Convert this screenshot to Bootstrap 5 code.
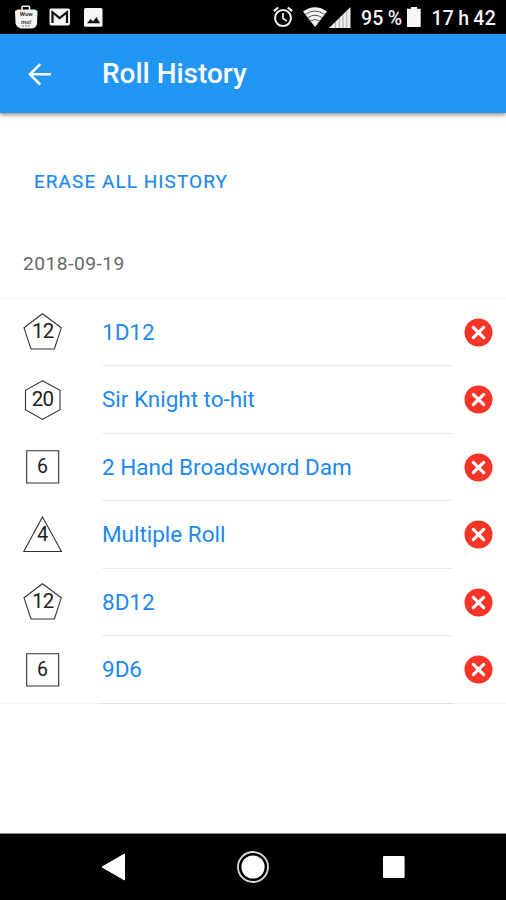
<!DOCTYPE html>
<html lang="en">
<head>
<meta charset="utf-8">
<meta name="viewport" content="width=device-width, initial-scale=1">
<title>Roll History</title>
<link href="https://cdn.jsdelivr.net/npm/bootstrap@5.3.0/dist/css/bootstrap.min.css" rel="stylesheet">
<style>
  body { font-family: Roboto, "Liberation Sans", sans-serif; background: #fff; height: 900px; overflow: hidden; }
  svg { display: block; flex: none; }
  svg text { font-family: Roboto, "Liberation Sans", sans-serif; }
  .status-bar { height: 34px; background: #000; color: #f2f2f2; padding: 0 10px 0 15px; font-size: 19.5px; font-weight: 500; white-space: nowrap; }
  .status-text { line-height: 34px; padding-top: 3px; margin-left: 10px; letter-spacing: .25px; word-spacing: -1px; }
  .mail-icon { margin-left: 11px; }
  .photo-icon { margin-left: 13px; }
  .wifi-icon { margin-left: 10px; }
  .signal-icon { margin-left: 2px; }
  .battery-icon { margin-left: 5px; }
  .app-bar { height: 79px; background: #2196f3; padding: 0 27px; gap: 49px; box-shadow: 0 2px 4px rgba(60,30,10,.5); }
  .app-title { font-size: 28px; font-weight: 500; letter-spacing: -.02px; line-height: 1; padding-top: 1px; }
  .erase-btn { margin: 45px 0 0 22px; padding: 12px; height: 48px; color: #2089f0; font-size: 19px; font-weight: 400; letter-spacing: 1.05px; line-height: 24px; border: 0; -webkit-text-stroke: .2px; }
  .day-label { height: 92.5px; padding: 22px 23px 0; font-size: 19.2px; letter-spacing: .5px; line-height: 72px; color: #666; border-bottom: 1px solid #eee; }
  .roll-list { --bs-list-group-bg: transparent; }
  .roll-list::after { content: ""; height: 1px; margin-top: -1px; background: #eee; }
  .roll-row { height: 67.5px; padding: 0 13px 0 23px; border: 0; }
  .roll-name { margin-left: 40px; width: 350px; height: 67.5px; line-height: 66px; font-size: 22.5px; letter-spacing: -.02px; color: #2089f0; text-decoration: none; border-bottom: 1px solid #ebebeb; white-space: nowrap; }
  .roll-row:last-child .roll-name { border-color: #ddd; }
  .shape { fill: none; stroke: #333; stroke-width: 1.1; }
  .nav-keys { height: 67px; background: #000; border-top: 1px solid #888; padding: 0 101px; }
  .home-key { margin-right: 3px; }
</style>
</head>
<body class="d-flex flex-column">
<svg width="0" height="0" class="d-none">
  <symbol id="d12" viewBox="0 0 39 40"><path class="shape" d="M19.5 1.8 38.3 15.8 31.4 37H8L1 15.8Z"/><text x="19.7" y="26" text-anchor="middle" font-size="20.5" fill="#222" letter-spacing="-.8">12</text></symbol>
  <symbol id="d20" viewBox="0 0 39 40"><path class="shape" d="M19.5 .8 37 10.3V29.7L19.5 39.4 2.5 29.7V10.3Z"/><text x="19.5" y="26.2" text-anchor="middle" font-size="20.5" fill="#222" letter-spacing="-.8">20</text></symbol>
  <symbol id="d6" viewBox="0 0 39 40"><path class="shape" d="M3.7 3.7H35.7V36H3.7Z"/><text x="19.6" y="26" text-anchor="middle" font-size="19.5" fill="#222">6</text></symbol>
  <symbol id="d4" viewBox="0 0 39 40"><path class="shape" d="M19.5 2 38.5 36.5H.8Z"/><text x="19.6" y="26.2" text-anchor="middle" font-size="20" fill="#222">4</text></symbol>
  <symbol id="del" viewBox="0 0 29 29"><circle cx="14.5" cy="14.5" r="14" fill="#f53528"/><path d="m9.3 9.3 10.4 10.4M19.7 9.3 9.3 19.7" stroke="#fff" stroke-width="3.1" stroke-linecap="round"/></symbol>
</svg>

<header class="status-bar d-flex align-items-center flex-shrink-0">
  <svg width="23" height="24" viewBox="0 0 23 24"><path d="M7 6V2.2Q7 1.2 8 1.2h5.5q1 0 1 1V6" fill="none" stroke="#eee" stroke-width="1.6"/><path d="M0 6 3 4.5h17L22.5 6 22 19q-1 4-5 4.5H6Q1 22 .5 18Z" fill="#f4f4f4"/><text x="11.2" y="11" text-anchor="middle" font-size="6" font-weight="700" fill="#333">Wow</text><text x="11.2" y="18.5" text-anchor="middle" font-size="6" font-weight="700" fill="#444">mo!</text><path d="M7 21h8" stroke="#777" stroke-dasharray="2 1"/></svg>
  <svg class="mail-icon" width="22" height="18" viewBox="0 0 22 18"><rect x=".5" y=".5" width="20.5" height="17" rx="2" fill="#f5f5f5"/><path d="M3.5 15V4.2L10.7 10 18 4.2V15" fill="none" stroke="#111" stroke-width="2.2"/></svg>
  <svg class="photo-icon" width="19" height="19" viewBox="0 0 19 19"><rect width="18.5" height="18.7" rx="1.5" fill="#f8f8f8"/><path d="m3 15.3 3.5-4.3 2.5 2.5L12.5 9l3.5 6.3Z" fill="#111"/></svg>

  <svg class="ms-auto" width="20" height="22" viewBox="0 0 20 22"><circle cx="10" cy="12" r="8" fill="none" stroke="#eee" stroke-width="2.1"/><path d="M.8 5.2 5.2 1.5M19.2 5.2 14.8 1.5" stroke="#eee" stroke-width="2.2"/><path d="M10 7v5.3l3.8 2.8" fill="none" stroke="#eee" stroke-width="1.7"/></svg>
  <svg class="wifi-icon" width="24" height="20" viewBox="0 0 24 20"><path d="M0 4.5Q12-4 24 4.5L12 20Z" fill="#f2f2f2"/><path d="M2.3 7.4Q12 .6 21.7 7.4M4.8 10.7Q12 5.8 19.2 10.7M7.3 14Q12 11 16.7 14" fill="none" stroke="#555" stroke-width="1"/></svg>
  <svg class="signal-icon" width="22" height="21" viewBox="0 0 22 21"><path d="M0 21 21.5 0V21Z" fill="#eee"/><path d="M6.5 15V21M10.3 11V21M14 8V21M17.8 4V21" stroke="#aaa"/></svg>
  <span class="status-text">95 %</span>
  <svg class="battery-icon" width="14" height="20" viewBox="0 0 14 20"><path d="M0 1.8H4V0H10V1.8H13.7V20H0Z" fill="#f8f8f8"/></svg>
  <span class="status-text">17 h 42</span>
</header>

<nav class="app-bar d-flex align-items-center text-white flex-shrink-0">
  <svg width="26" height="24" viewBox="0 0 26 24"><path d="M24 12.3H3.5M13.2 2.2 3 12.3 13.2 22.5" fill="none" stroke="#fff" stroke-width="2.6"/></svg>
  <h1 class="app-title mb-0">Roll History</h1>
</nav>

<main class="flex-grow-1">
  <button type="button" class="btn erase-btn d-block">ERASE ALL HISTORY</button>
  <div class="day-label">2018-09-19</div>
  <div class="list-group list-group-flush roll-list">
    <div class="list-group-item roll-row d-flex align-items-center"><svg width="39" height="40"><use href="#d12"/></svg><a class="roll-name">1D12</a><svg class="ms-auto" width="29" height="29"><use href="#del"/></svg></div>
    <div class="list-group-item roll-row d-flex align-items-center"><svg width="39" height="40"><use href="#d20"/></svg><a class="roll-name">Sir Knight to-hit</a><svg class="ms-auto" width="29" height="29"><use href="#del"/></svg></div>
    <div class="list-group-item roll-row d-flex align-items-center"><svg width="39" height="40"><use href="#d6"/></svg><a class="roll-name">2 Hand Broadsword Dam</a><svg class="ms-auto" width="29" height="29"><use href="#del"/></svg></div>
    <div class="list-group-item roll-row d-flex align-items-center"><svg width="39" height="40"><use href="#d4"/></svg><a class="roll-name">Multiple Roll</a><svg class="ms-auto" width="29" height="29"><use href="#del"/></svg></div>
    <div class="list-group-item roll-row d-flex align-items-center"><svg width="39" height="40"><use href="#d12"/></svg><a class="roll-name">8D12</a><svg class="ms-auto" width="29" height="29"><use href="#del"/></svg></div>
    <div class="list-group-item roll-row d-flex align-items-center"><svg width="39" height="40"><use href="#d6"/></svg><a class="roll-name">9D6</a><svg class="ms-auto" width="29" height="29"><use href="#del"/></svg></div>
  </div>
</main>

<footer class="nav-keys d-flex align-items-center justify-content-between flex-shrink-0">
  <svg width="25" height="28" viewBox="0 0 25 28"><path d="M1 14 23.5 1V27Z" fill="#fff" stroke="#fff" stroke-linejoin="round"/></svg>
  <svg class="home-key" width="32" height="32" viewBox="0 0 32 32"><circle cx="16" cy="16" r="15" fill="none" stroke="#ddd" stroke-width="1.8"/><circle cx="16" cy="16" r="11.6" fill="#fff"/></svg>
  <svg width="22" height="22" viewBox="0 0 22 22"><rect width="21.6" height="22" rx="1" fill="#fff"/></svg>
</footer>
<script src="https://cdn.jsdelivr.net/npm/bootstrap@5.3.0/dist/js/bootstrap.bundle.min.js"></script>
</body>
</html>
